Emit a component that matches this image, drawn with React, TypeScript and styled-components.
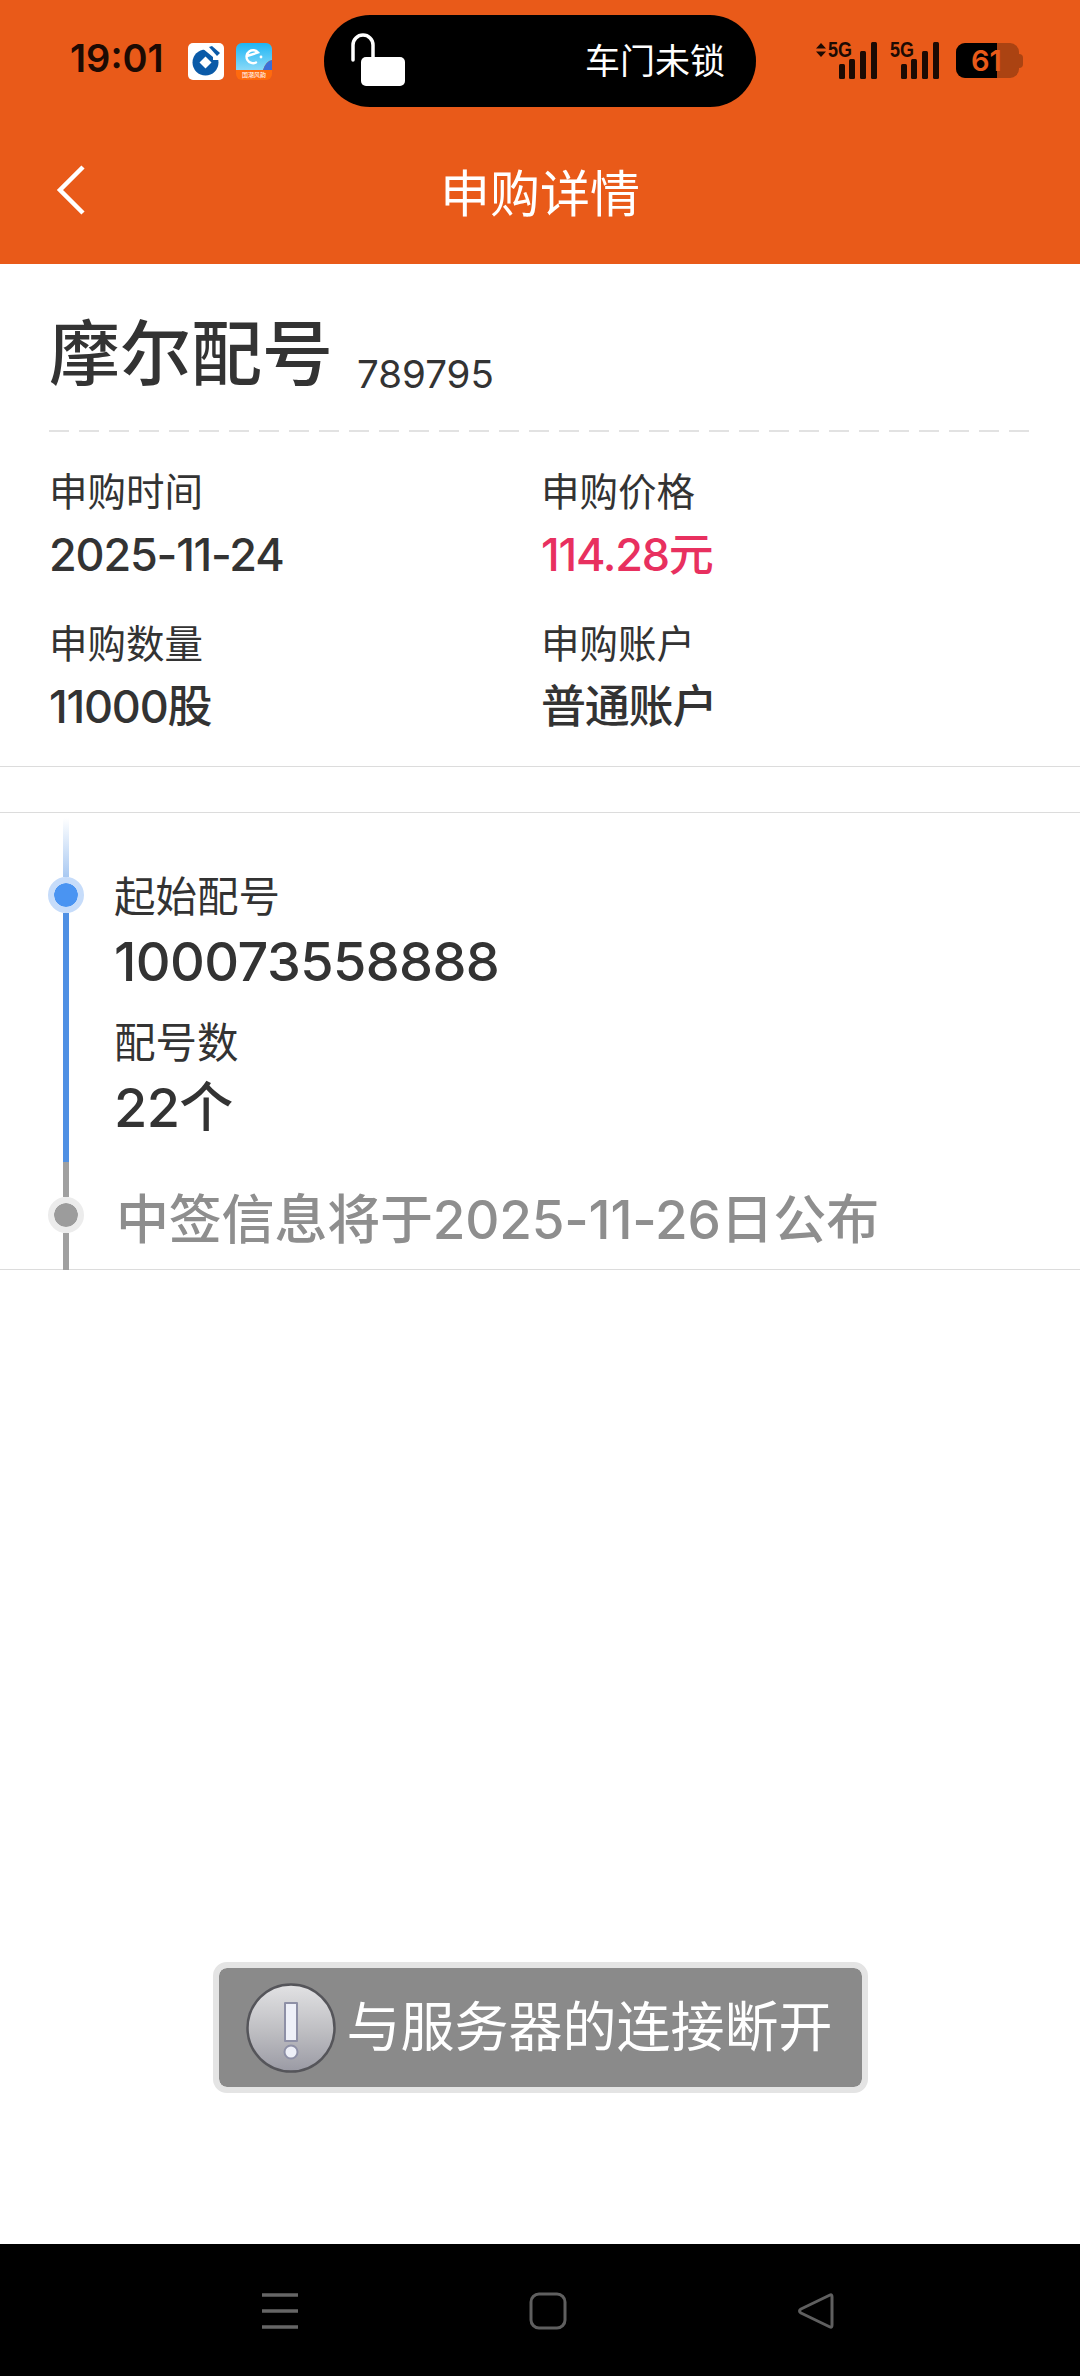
import React from "react";
import styled, { createGlobalStyle } from "styled-components";

const GlobalStyle = createGlobalStyle`
  html, body {
    margin: 0;
    padding: 0;
    background: #fff;
  }
  body {
    font-family: Inter, "Noto Sans CJK SC", sans-serif;
  }
`;

const Page = styled.div`
  width: 1080px;
  height: 2376px;
  display: flex;
  flex-direction: column;
  overflow: hidden;
  color: #333;
`;

const Header = styled.header`
  height: 264px;
  background: #e95a19;
  flex: none;
`;

const StatusBar = styled.div`
  height: 120px;
  padding-top: 15px;
  box-sizing: border-box;
  display: flex;
  align-items: flex-start;
`;

const Clock = styled.span`
  margin: 20px 0 0 70px;
  width: 118px;
  font-size: 38px;
  line-height: 46px;
  font-weight: 600;
  color: #1c0a03;
`;

const AppIcons = styled.div`
  margin-top: 28px;
  width: 136px;
  display: flex;
  gap: 12px;
`;

const Island = styled.div`
  width: 432px;
  height: 92px;
  border-radius: 46px;
  background: #000;
  display: flex;
  align-items: center;
  justify-content: space-between;
  padding: 0 31px 0 26px;
  box-sizing: border-box;
`;

const IslandText = styled.span`
  color: #fff;
  font-size: 35px;
  line-height: 92px;
`;

const SignalGroup = styled.div`
  margin: 22px 0 0 58px;
  display: flex;
  align-items: flex-start;
  gap: 13px;
`;

const BatteryWrap = styled.div`
  margin: 6px 0 0 4px;
  display: flex;
  align-items: center;
`;

const Battery = styled.div`
  width: 63px;
  height: 35px;
  border-radius: 9px;
  position: relative;
  background: #ab4312;
`;

const BatteryFill = styled.div`
  width: 41px;
  height: 35px;
  border-radius: 9px 0 0 9px;
  background: #000;
`;

const BatteryLevel = styled.span`
  position: absolute;
  left: 15px;
  top: 0;
  font-size: 29px;
  line-height: 35px;
  font-weight: 600;
  color: #e95a19;
`;

const BatteryNub = styled.div`
  width: 4px;
  height: 14px;
  border-radius: 0 4px 4px 0;
  background: #ab4312;
`;

const TitleBar = styled.div`
  height: 144px;
  display: flex;
  align-items: center;
  justify-content: center;
  position: relative;
`;

const BackButton = styled.svg`
  position: absolute;
  left: 55px;
  top: 44px;
`;

const Title = styled.h1`
  margin: 0 0 -3px;
  font-size: 50px;
  line-height: 60px;
  font-weight: 400;
  color: #fff;
`;

const InfoCard = styled.section`
  height: 503px;
  flex: none;
  box-sizing: border-box;
  border-bottom: 1px solid #dcdcdc;
  padding: 0 49px;
`;

const NameRow = styled.div`
  height: 168px;
  box-sizing: border-box;
  padding-top: 47px;
  background: repeating-linear-gradient(90deg, #e2e2e2 0 20px, transparent 20px 30px) bottom / 100% 2px no-repeat;
  display: flex;
  align-items: flex-start;
`;

const StockName = styled.span`
  font-size: 71px;
  line-height: 84px;
  font-weight: 500;
`;

const StockCode = styled.span`
  margin: 40px 0 0 24px;
  font-size: 38.5px;
  line-height: 46px;
`;

const InfoGrid = styled.div`
  display: grid;
  grid-template-columns: 492px 1fr;
  row-gap: 39px;
  padding-top: 37px;
`;

const InfoItem = styled.div`
  display: flex;
  flex-direction: column;
`;

const InfoLabel = styled.span`
  font-size: 38.5px;
  line-height: 46px;
`;

const InfoValue = styled.span<{ $price?: boolean }>`
  margin-top: 13px;
  font-size: 45px;
  line-height: 54px;
  letter-spacing: -1.2px;
  font-weight: 500;
  color: ${(p) => (p.$price ? "#e8305f" : "#333")};
`;

const Spacer = styled.div`
  height: 45px;
  flex: none;
`;

const Timeline = styled.section`
  height: 458px;
  flex: none;
  box-sizing: border-box;
  border-top: 1px solid #dcdcdc;
  border-bottom: 1px solid #dcdcdc;
  display: flex;
`;

const Rail = styled.div`
  margin-left: 48px;
  width: 36px;
  padding-top: 5px;
  display: flex;
  flex-direction: column;
  align-items: center;
`;

const RailLine = styled.div<{ $height: number; $kind: "fade" | "blue" | "grey" }>`
  width: 6px;
  height: ${(p) => p.$height}px;
  flex: none;
  background: ${(p) =>
    p.$kind === "fade"
      ? "linear-gradient(#ffffff, #a9c9f2)"
      : p.$kind === "blue"
      ? "#4f90e4"
      : "#a0a0a0"};
`;

const RailDot = styled.div<{ $active?: boolean }>`
  width: 36px;
  height: 36px;
  flex: none;
  box-sizing: border-box;
  border-radius: 50%;
  border: 6px solid ${(p) => (p.$active ? "#c6dcfa" : "#ececec")};
  background: ${(p) => (p.$active ? "#4a94f2" : "#9c9c9c")};
  background-clip: padding-box;
`;

const TimelineBody = styled.div`
  padding: 59px 0 0 30px;
  display: flex;
  flex-direction: column;
`;

const StepLabel = styled.span`
  font-size: 41.5px;
  line-height: 50px;
`;

const StepValue = styled.span`
  margin: 7px 0 23px;
  font-size: 54px;
  line-height: 66px;
  font-weight: 500;
  letter-spacing: -0.6px;
`;

const Notice = styled.span`
  margin: 23px 0 0 2px;
  font-size: 53px;
  line-height: 66px;
  font-weight: 500;
  letter-spacing: -0.2px;
  color: #8e8e8e;
`;

const Content = styled.main`
  flex: 1;
  display: flex;
  justify-content: center;
  padding-top: 692px;
`;

const Toast = styled.div`
  width: 655px;
  height: 131px;
  box-sizing: border-box;
  border: 6px solid #e4e4e4;
  border-radius: 14px;
  background: #8a8a8a;
  background-clip: padding-box;
  display: flex;
  align-items: center;
  padding-left: 26px;
  gap: 10px;
`;

const ToastText = styled.span`
  color: #fff;
  font-size: 54px;
  line-height: 64px;
  font-weight: 400;
  white-space: nowrap;
`;

const NavBar = styled.nav`
  height: 132px;
  box-sizing: border-box;
  flex: none;
  background: #000;
  display: flex;
  align-items: flex-start;
  padding: 48px 0 0 261px;
  gap: 230px;
`;

const Tile = styled.svg`
  display: block;
`;

const TinyCaption = styled.text`
  font-size: 6px;
  fill: #fff;
`;

const SignalLabel = styled.text`
  font-family: "Liberation Sans", sans-serif;
  font-size: 22px;
  font-weight: 700;
  fill: #1c0a03;
`;

const CcbIcon: React.FC = () => (
  <Tile width="36" height="37" viewBox="0 0 36 37">
    <rect width="36" height="37" rx="5" fill="#fff" />
    <circle cx="17.5" cy="19.5" r="13" fill="#0a5aa8" />
    <path d="M14 5 L20 3 L33 13 L32 17 L25 17 L25 14 Z" fill="#fff" />
    <path d="M21 4 L24 3 L32 10 L29 13 Z" fill="#0a5aa8" />
    <path d="M17.5 13.5 L23.5 19.5 L17.5 25.5 L11.5 19.5 Z" fill="#fff" />
  </Tile>
);

const ElemeIcon: React.FC = () => (
  <Tile width="36" height="37" viewBox="0 0 36 37">
    <defs>
      <linearGradient id="elemeSky" x1="0" y1="0" x2="0" y2="1">
        <stop offset="0" stopColor="#1fb6f5" />
        <stop offset="1" stopColor="#8ad9f7" />
      </linearGradient>
    </defs>
    <rect width="36" height="37" rx="6" fill="#ff6a0e" />
    <path d="M0 6 a6 6 0 0 1 6 -6 H30 a6 6 0 0 1 6 6 V17 Q30 18 27 27 H0 Z" fill="url(#elemeSky)" />
    <path d="M36 17 Q30 18 27 27 L36 27 Z" fill="#3a6fd8" />
    <path d="M11 13 L22 9.5 A6.5 6.5 0 1 0 20 19.5" fill="none" stroke="#fff" strokeWidth="2.4" strokeLinecap="round" />
    <circle cx="25" cy="14" r="1.4" fill="#fff" />
    <TinyCaption x="6" y="34">国潮风韵</TinyCaption>
  </Tile>
);

const LockIcon: React.FC = () => (
  <svg width="56" height="58" viewBox="0 0 56 58">
    <path d="M3 28 V13 A10 10 0 0 1 23 13 V26" fill="none" stroke="#fff" strokeWidth="3.5" strokeLinecap="round" />
    <rect x="11" y="25" width="44" height="29" rx="5" fill="#fff" />
  </svg>
);

// the status icons get 5px of room above the bars so the 5G label stays inside the svg
const SignalIcon: React.FC<{ arrows?: boolean }> = ({ arrows }) => (
  <svg width={arrows ? 63 : 49} height="43" viewBox={arrows ? "-15 -5 63 43" : "-1 -5 49 43"}>
    {arrows && <path d="M-13 6.5 L-8 1 L-3 6.5 Z M-13 9.5 L-8 15 L-3 9.5 Z" fill="#1c0a03" />}
    <SignalLabel x="-1" y="15" textLength="24" lengthAdjust="spacingAndGlyphs">
      5G
    </SignalLabel>
    <rect x="10" y="22" width="6" height="15" rx="1.5" fill="#1c0a03" />
    <rect x="20" y="17" width="6" height="20" rx="1.5" fill="#1c0a03" />
    <rect x="31" y="9" width="6" height="28" rx="1.5" fill="#1c0a03" />
    <rect x="42" y="0" width="6" height="37" rx="1.5" fill="#1c0a03" />
  </svg>
);

const AlertIcon: React.FC = () => (
  <svg width="92" height="94" viewBox="0 0 92 94">
    <defs>
      <linearGradient id="alertFace" x1="0" y1="0" x2="0" y2="1">
        <stop offset="0" stopColor="#e2e2e4" />
        <stop offset="0.55" stopColor="#bdbdc1" />
        <stop offset="1" stopColor="#9a9aa4" />
      </linearGradient>
    </defs>
    <circle cx="46" cy="47" r="43.5" fill="url(#alertFace)" stroke="#55555a" strokeWidth="2.5" />
    <path d="M40 22 H52 V60 H50 L42 60 H40 Z" fill="#eef0f8" stroke="#8e90a6" strokeWidth="2" strokeLinejoin="round" />
    <circle cx="46" cy="71" r="6.5" fill="#eef0f8" stroke="#8e90a6" strokeWidth="2" />
  </svg>
);

const MenuIcon: React.FC = () => (
  <svg width="38" height="38" viewBox="0 0 38 38">
    <path d="M1 3 H37 M1 19 H37 M1 35 H37" stroke="#666" strokeWidth="3.4" />
  </svg>
);

const HomeIcon: React.FC = () => (
  <svg width="38" height="38" viewBox="0 0 38 38">
    <rect x="2" y="2" width="34" height="34" rx="8" fill="none" stroke="#5f5f5f" strokeWidth="3" />
  </svg>
);

const BackIcon: React.FC = () => (
  <svg width="38" height="38" viewBox="0 0 38 38">
    <path
      d="M33 3 Q35 2 35 5 V33 Q35 36 33 35 L4 21 Q1 19 4 17 Z"
      fill="none"
      stroke="#5f5f5f"
      strokeWidth="3"
      strokeLinejoin="round"
    />
  </svg>
);

const App: React.FC = () => {
  return (
    <Page>
      <GlobalStyle />
      <Header>
        <StatusBar>
          <Clock>19:01</Clock>
          <AppIcons>
            <CcbIcon />
            <ElemeIcon />
          </AppIcons>
          <Island>
            <LockIcon />
            <IslandText>车门未锁</IslandText>
          </Island>
          <SignalGroup>
            <SignalIcon arrows />
            <SignalIcon />
            <BatteryWrap>
              <Battery>
                <BatteryFill />
                <BatteryLevel>61</BatteryLevel>
              </Battery>
              <BatteryNub />
            </BatteryWrap>
          </SignalGroup>
        </StatusBar>
        <TitleBar>
          <BackButton width="32" height="52" viewBox="0 0 32 52">
            <path d="M28 3 L5 26 L28 49" fill="none" stroke="#fff" strokeWidth="4.5" />
          </BackButton>
          <Title>申购详情</Title>
        </TitleBar>
      </Header>

      <InfoCard>
        <NameRow>
          <StockName>摩尔配号</StockName>
          <StockCode>789795</StockCode>
        </NameRow>
        <InfoGrid>
          <InfoItem>
            <InfoLabel>申购时间</InfoLabel>
            <InfoValue>2025-11-24</InfoValue>
          </InfoItem>
          <InfoItem>
            <InfoLabel>申购价格</InfoLabel>
            <InfoValue $price>114.28元</InfoValue>
          </InfoItem>
          <InfoItem>
            <InfoLabel>申购数量</InfoLabel>
            <InfoValue>11000股</InfoValue>
          </InfoItem>
          <InfoItem>
            <InfoLabel>申购账户</InfoLabel>
            <InfoValue>普通账户</InfoValue>
          </InfoItem>
        </InfoGrid>
      </InfoCard>

      <Spacer />

      <Timeline>
        <Rail>
          <RailLine $kind="fade" $height={59} />
          <RailDot $active />
          <RailLine $kind="blue" $height={249} />
          <RailLine $kind="grey" $height={35} />
          <RailDot />
          <RailLine $kind="grey" $height={37} />
        </Rail>
        <TimelineBody>
          <StepLabel>起始配号</StepLabel>
          <StepValue>100073558888</StepValue>
          <StepLabel>配号数</StepLabel>
          <StepValue>22个</StepValue>
          <Notice>中签信息将于2025-11-26日公布</Notice>
        </TimelineBody>
      </Timeline>

      <Content>
        <Toast>
          <AlertIcon />
          <ToastText>与服务器的连接断开</ToastText>
        </Toast>
      </Content>

      <NavBar>
        <MenuIcon />
        <HomeIcon />
        <BackIcon />
      </NavBar>
    </Page>
  );
};

export default App;
